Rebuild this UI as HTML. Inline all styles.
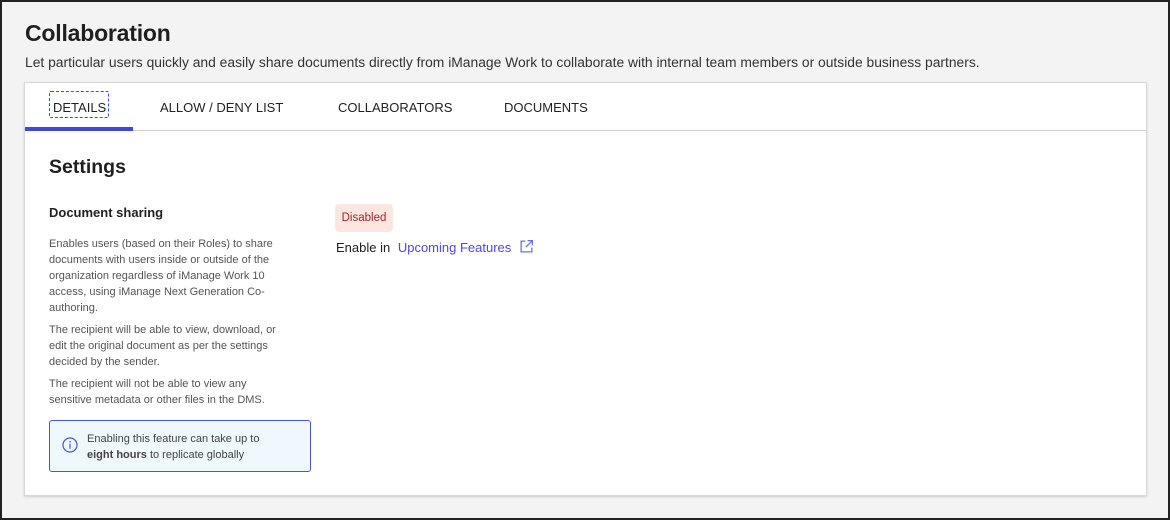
<!DOCTYPE html>
<html><head><style>
*{margin:0;padding:0;box-sizing:border-box}
body{width:1170px;height:520px;background:#f3f3f3;font-family:"Liberation Sans",sans-serif;color:#222;position:relative;overflow:hidden;border:2px solid #222}
.abs{position:absolute;white-space:nowrap}
h1{position:absolute;left:23px;top:18px;font-size:23px;font-weight:bold;color:#1f1f1f;letter-spacing:-0.2px}
.sub{left:23px;top:52px;font-size:13.85px;color:#333}
.card{position:absolute;left:22px;top:80px;width:1123px;height:414px;background:#fff;border:1px solid #d8d8d8;box-shadow:0 1px 2px rgba(0,0,0,.15)}
.tabs{position:absolute;left:0;top:0;width:100%;height:48px;border-bottom:1px solid #d0d0d0}
.tab{position:absolute;top:17px;font-size:13px;color:#222}
.ul{position:absolute;left:0;top:44px;width:108px;height:4px;background:#3f48d8}
.focus{position:absolute;left:24px;top:8px;width:60px;height:27px;border:1px dashed #3f48d8;border-radius:2px}
.desc{position:absolute;left:24px;font-size:11px;line-height:16px;color:#555;white-space:nowrap}
</style></head><body>
<h1>Collaboration</h1>
<div class="abs sub">Let particular users quickly and easily share documents directly from iManage Work to collaborate with internal team members or outside business partners.</div>
<div class="card">
 <div class="tabs">
  <div class="focus"></div>
  <div class="tab" style="left:28px">DETAILS</div>
  <div class="tab" style="left:135px">ALLOW / DENY LIST</div>
  <div class="tab" style="left:313px">COLLABORATORS</div>
  <div class="tab" style="left:479px">DOCUMENTS</div>
  <div class="ul"></div>
 </div>
 <div class="abs" style="left:24px;top:73px;font-size:19.5px;font-weight:bold;color:#1f1f1f">Settings</div>
 <div class="abs" style="left:24px;top:122px;font-size:13px;font-weight:bold;color:#222">Document sharing</div>
 <div class="desc" style="top:153px">Enables users (based on their Roles) to share<br>documents with users inside or outside of the<br>organization regardless of iManage Work 10<br>access, using iManage Next Generation Co-<br>authoring.</div>
 <div class="desc" style="top:239px">The recipient will be able to view, download, or<br>edit the original document as per the settings<br>decided by the sender.</div>
 <div class="desc" style="top:293px">The recipient will not be able to view any<br>sensitive metadata or other files in the DMS.</div>
 <div style="position:absolute;left:24px;top:337px;width:262px;height:52px;background:#eef8fd;border:1px solid #4b55d6;border-radius:3px">
  <svg style="position:absolute;left:12px;top:16px" width="16" height="16" viewBox="0 0 16 16"><circle cx="8" cy="8" r="7" fill="none" stroke="#4b55d6" stroke-width="1.2"/><rect x="7.4" y="6.8" width="1.2" height="5" fill="#4b55d6"/><circle cx="8" cy="4.8" r=".8" fill="#4b55d6"/></svg>
  <div style="position:absolute;left:37px;top:10px;font-size:11px;line-height:16px;color:#444">Enabling this feature can take up to<br><b>eight hours</b> to replicate globally</div>
 </div>
 <div style="position:absolute;left:310px;top:121px;width:58px;height:28px;background:#fbe6e0;border-radius:4px;font-size:11.5px;color:#a4262c;text-align:center;line-height:28px">Disabled</div>
 <div class="abs" style="left:311px;top:156px;font-size:13px;color:#222">Enable in <span style="color:#4f46e5;margin-left:4px">Upcoming Features</span>
  <svg style="vertical-align:-2px;margin-left:4px" width="15" height="15" viewBox="0 0 14 14" fill="none" stroke="#6b6ee8" stroke-width="1.2"><path d="M6 2H2v10h10V8M8 1.5h4.5V6M12.5 1.5L6.5 7.5"/></svg></div>
</div>
</body></html>
